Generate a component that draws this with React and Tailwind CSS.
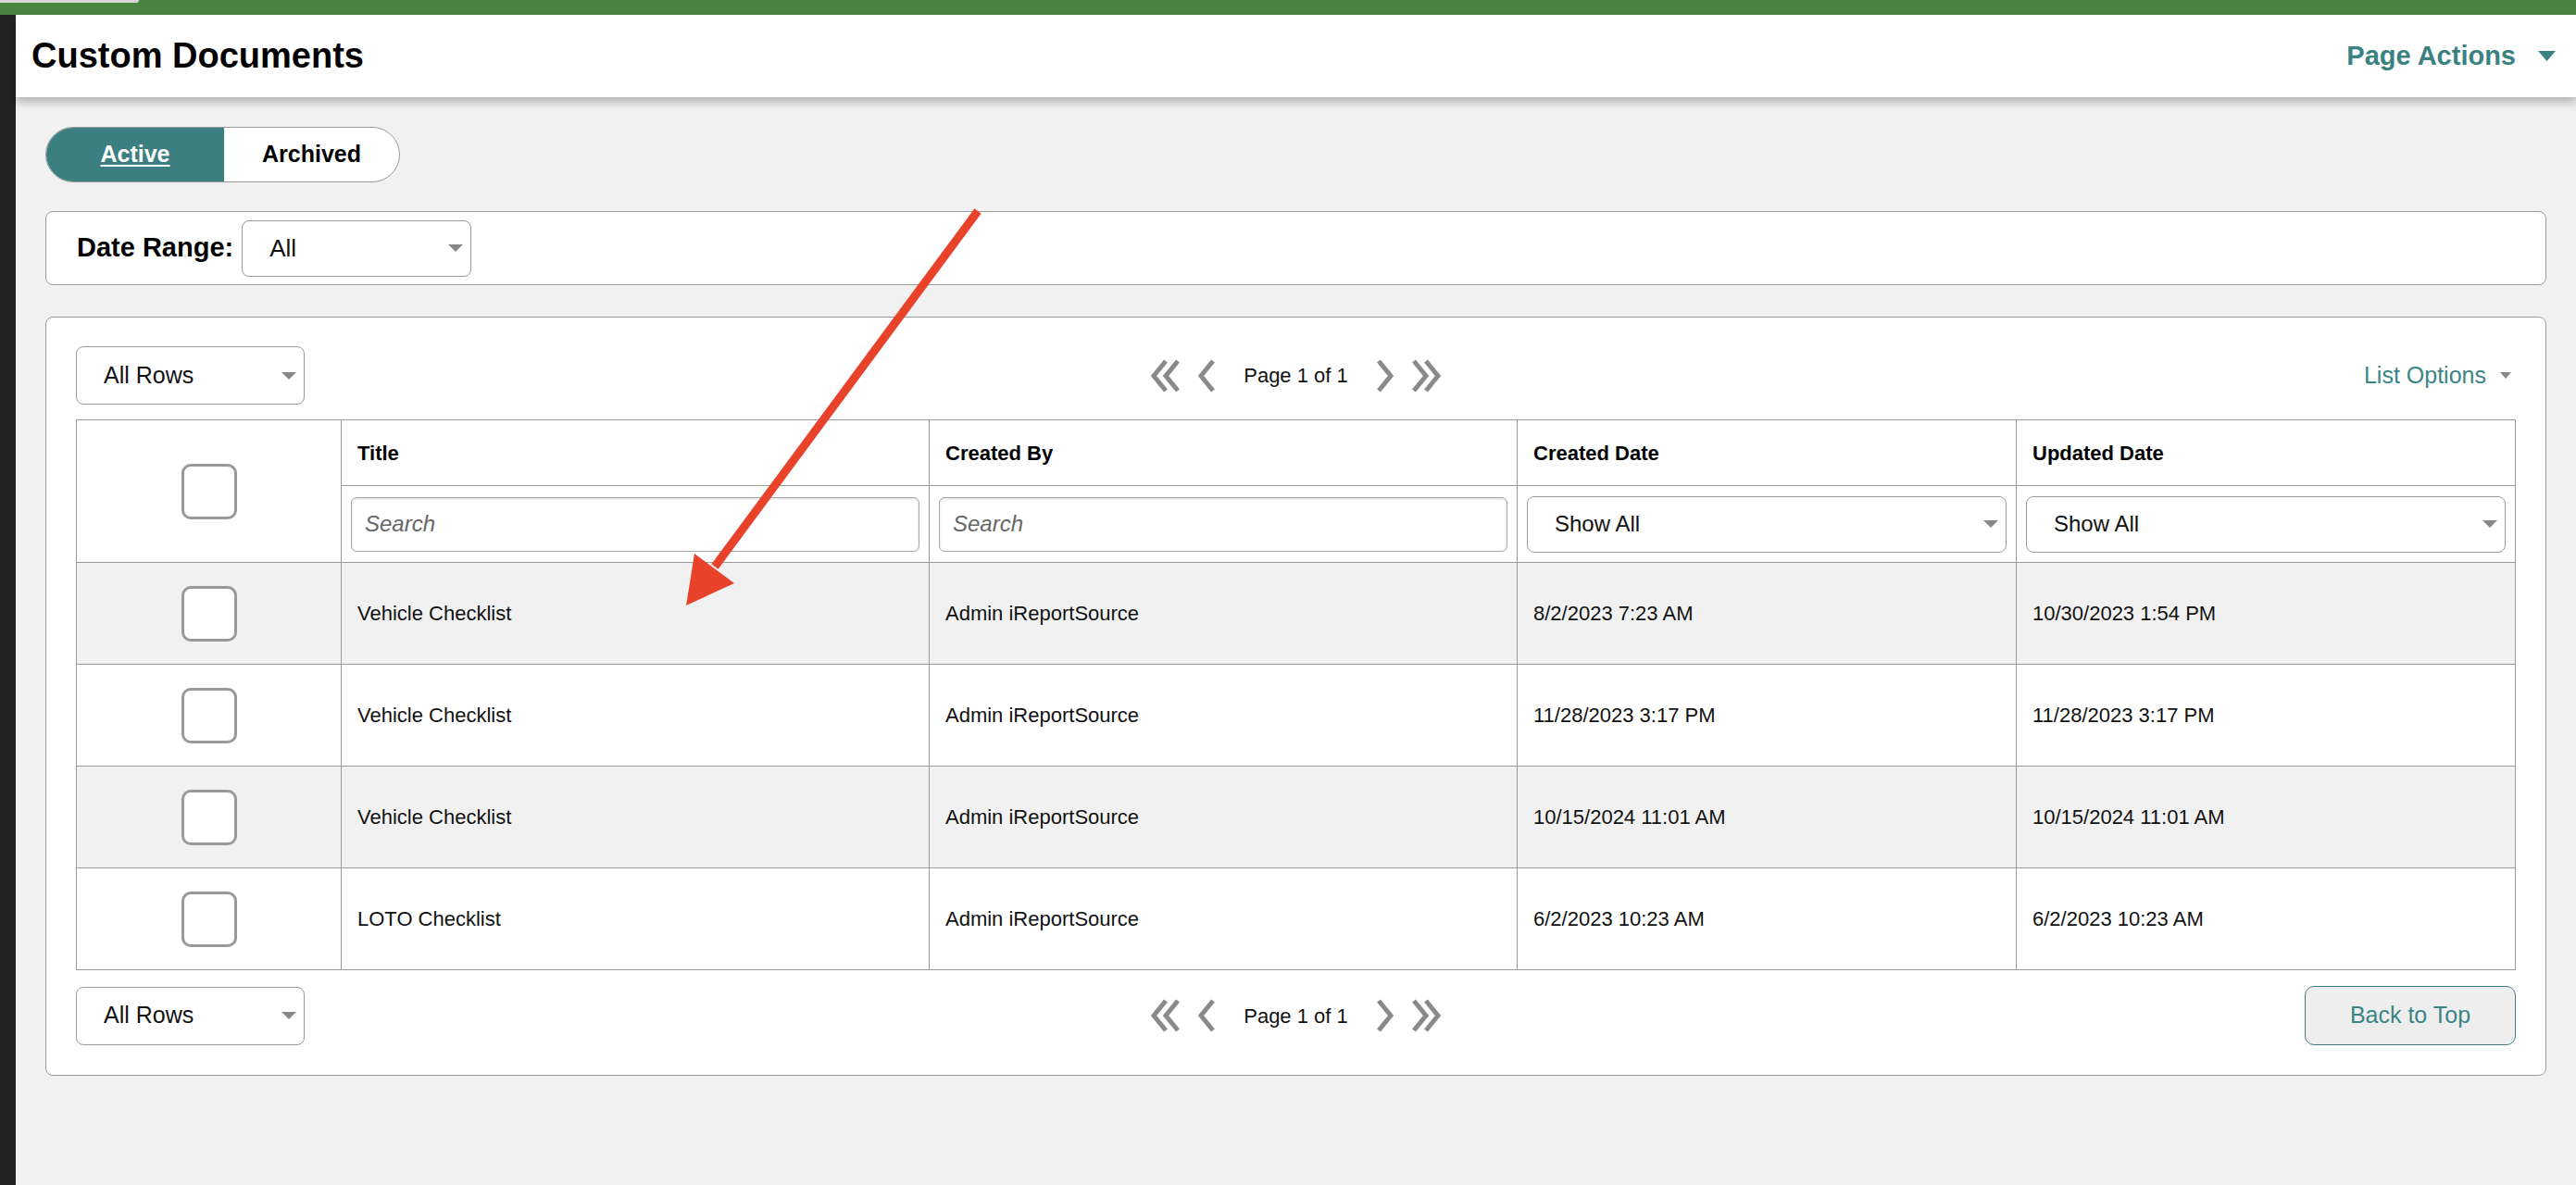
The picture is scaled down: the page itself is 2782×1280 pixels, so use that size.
import React from 'react';

const rows = [
  { title: 'Vehicle Checklist', by: 'Admin iReportSource', created: '8/2/2023 7:23 AM', updated: '10/30/2023 1:54 PM' },
  { title: 'Vehicle Checklist', by: 'Admin iReportSource', created: '11/28/2023 3:17 PM', updated: '11/28/2023 3:17 PM' },
  { title: 'Vehicle Checklist', by: 'Admin iReportSource', created: '10/15/2024 11:01 AM', updated: '10/15/2024 11:01 AM' },
  { title: 'LOTO Checklist', by: 'Admin iReportSource', created: '6/2/2023 10:23 AM', updated: '6/2/2023 10:23 AM' },
];

function Caret({ w = 16, h = 8, color = '#888888' }) {
  return (
    <svg width={w} height={h} viewBox={`0 0 ${w} ${h}`} className="shrink-0">
      <polygon points={`0,0 ${w},0 ${w / 2},${h}`} fill={color} />
    </svg>
  );
}

function FakeSelect({ label, className, textClass = 'text-[25px]' }) {
  return (
    <div className={`flex items-center justify-between rounded-[8px] border border-[#9a9a9a] bg-white pl-[29px] pr-[8px] ${className}`}>
      <span className={`${textClass} text-[#111]`}>{label}</span>
      <Caret />
    </div>
  );
}

function Checkbox() {
  return <div className="mx-auto h-[60px] w-[60px] rounded-[10px] border-[3px] border-[#999] bg-white" />;
}

function Chevron({ dir = 'left', double = false }) {
  const w = double ? 32 : 19;
  const one = (x0) =>
    dir === 'left'
      ? `${x0 + 16},2 ${x0 + 3},18 ${x0 + 16},34`
      : `${x0 + 3},2 ${x0 + 16},18 ${x0 + 3},34`;
  return (
    <svg width={w} height={36} viewBox={`0 0 ${w} 36`} className="shrink-0">
      <polyline points={one(0)} fill="none" stroke="#8a8a8a" strokeWidth="5" />
      {double && <polyline points={one(13)} fill="none" stroke="#8a8a8a" strokeWidth="5" />}
    </svg>
  );
}

function Pager() {
  return (
    <div className="flex items-center justify-self-center">
      <Chevron dir="left" double />
      <div className="ml-[19px]"><Chevron dir="left" /></div>
      <span className="mx-[30px] text-[22px] text-[#111]">Page 1 of 1</span>
      <Chevron dir="right" />
      <div className="ml-[19px]"><Chevron dir="right" double /></div>
    </div>
  );
}

function Search() {
  return (
    <input
      placeholder="Search"
      className="h-[59px] w-full rounded-[6px] border border-[#a8a8a8] bg-white px-[14px] text-[24px] shadow-[inset_0_1px_3px_rgba(0,0,0,0.15)] outline-none placeholder:italic placeholder:text-[#666]"
    />
  );
}

export default function App() {
  return (
    <div className="relative min-h-[1280px] overflow-hidden bg-[#f1f1f1] font-['Liberation_Sans',Arial,sans-serif] text-[#111]">
      <div className="h-[16px] bg-[#4a8540]">
        <div className="h-[3px] w-[150px] rounded-br-[3px] bg-[#d6d6d6]" />
      </div>

      <div className="flex min-h-[1264px]">
        <div className="w-[17px] shrink-0 bg-[#222222]" />

        <div className="flex-1">
          <div className="relative z-10 flex h-[89px] items-center justify-between bg-white pl-[17px] pr-[23px] shadow-[0_5px_10px_rgba(0,0,0,0.28)]">
            <h1 className="text-[38px] font-bold text-black">Custom Documents</h1>
            <div className="flex items-center gap-[24px]">
              <span className="text-[29px] font-bold text-[#3a8282]">Page Actions</span>
              <Caret w={19} h={11} color="#3a8282" />
            </div>
          </div>

          <div className="pl-[32px] pr-[33px] pt-[32px]">
            <div className="flex h-[60px] w-[383px] overflow-hidden rounded-full border border-[#9a9a9a] bg-white">
              <div className="flex w-[192px] items-center justify-center bg-[#3b7f80] text-[25px] font-bold text-white underline underline-offset-[3px]">
                Active
              </div>
              <div className="flex flex-1 items-center justify-center text-[25px] font-bold text-black">Archived</div>
            </div>

            <div className="mt-[31px] flex h-[80px] items-center rounded-[8px] border border-[#9a9a9a] bg-white pl-[33px]">
              <span className="mr-[9px] text-[29px] font-bold text-black">Date Range:</span>
              <FakeSelect label="All" className="h-[61px] w-[248px]" textClass="text-[26px]" />
            </div>

            <div className="mt-[34px] rounded-[8px] border border-[#9a9a9a] bg-white px-[32px] pb-[32px] pt-[31px]">
              <div className="grid h-[63px] grid-cols-3 items-center">
                <FakeSelect label="All Rows" className="h-[63px] w-[247px]" />
                <Pager />
                <div className="flex items-center justify-self-end pr-[5px]">
                  <span className="text-[25px] text-[#3a8585]">List Options</span>
                  <div className="ml-[15px]"><Caret w={12} h={7} /></div>
                </div>
              </div>

              <table className="mt-[16px] w-full table-fixed border-collapse">
                <colgroup>
                  <col className="w-[286px]" />
                  <col className="w-[635px]" />
                  <col className="w-[635px]" />
                  <col className="w-[539px]" />
                  <col className="w-[539px]" />
                </colgroup>
                <thead>
                  <tr className="h-[71px]">
                    <th rowSpan={2} className="border border-[#9a9a9a] align-middle">
                      <Checkbox />
                    </th>
                    {['Title', 'Created By', 'Created Date', 'Updated Date'].map((h) => (
                      <th key={h} className="border border-[#9a9a9a] pl-[17px] text-left align-middle text-[22px] font-bold text-black">
                        {h}
                      </th>
                    ))}
                  </tr>
                  <tr className="h-[83px]">
                    <td className="border border-[#9a9a9a] px-[10px]"><Search /></td>
                    <td className="border border-[#9a9a9a] px-[10px]"><Search /></td>
                    <td className="border border-[#9a9a9a] px-[10px]">
                      <FakeSelect label="Show All" className="h-[61px] w-full" textClass="text-[24px]" />
                    </td>
                    <td className="border border-[#9a9a9a] px-[10px]">
                      <FakeSelect label="Show All" className="h-[61px] w-full" textClass="text-[24px]" />
                    </td>
                  </tr>
                </thead>
                <tbody>
                  {rows.map((r, i) => (
                    <tr key={i} className={`h-[110px] ${i % 2 === 0 ? 'bg-[#f1f1f1]' : 'bg-white'}`}>
                      <td className="border border-[#9a9a9a] align-middle"><Checkbox /></td>
                      <td className="border border-[#9a9a9a] pl-[17px] text-[22px]">{r.title}</td>
                      <td className="border border-[#9a9a9a] pl-[17px] text-[22px]">{r.by}</td>
                      <td className="border border-[#9a9a9a] pl-[17px] text-[22px]">{r.created}</td>
                      <td className="border border-[#9a9a9a] pl-[17px] text-[22px]">{r.updated}</td>
                    </tr>
                  ))}
                </tbody>
              </table>

              <div className="mt-[17px] grid h-[64px] grid-cols-3 items-center">
                <FakeSelect label="All Rows" className="h-[63px] w-[247px]" />
                <Pager />
                <button
                  type="button"
                  className="h-[64px] w-[228px] justify-self-end rounded-[10px] border-[1.5px] border-[#3a8080] bg-[#eeeeee] text-[25px] text-[#3a8585]"
                >
                  Back to Top
                </button>
              </div>
            </div>
          </div>
        </div>
      </div>

      {/* red annotation arrow drawn over the page */}
      <svg className="pointer-events-none absolute left-0 top-0 z-20" width="2782" height="1280" viewBox="0 0 2782 1280">
        <line x1="1056" y1="228" x2="772" y2="612" stroke="#e8432a" strokeWidth="9" />
        <polygon points="741,654 750,598 793,630" fill="#e8432a" />
      </svg>
    </div>
  );
}
